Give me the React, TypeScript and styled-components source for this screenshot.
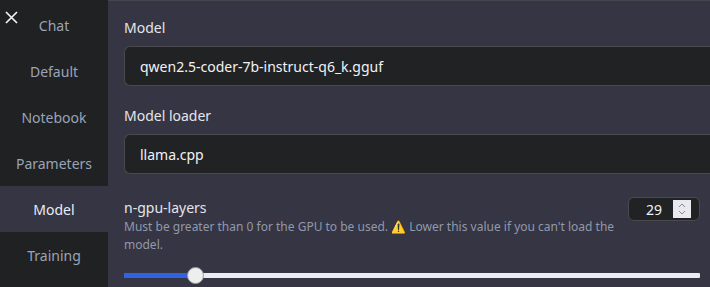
import React from 'react';
import styled, { createGlobalStyle } from 'styled-components';

const GlobalStyle = createGlobalStyle`
  html, body {
    margin: 0;
    padding: 0;
    background: #202123;
    font-family: "Noto Sans", "Open Sans", sans-serif;
    overflow: hidden;
  }
`;

const tabs = ['Chat', 'Default', 'Notebook', 'Parameters', 'Model', 'Training'];

export default function App() {
  return (
    <>
      <GlobalStyle />
      <Page>
        <Sidebar>
          <Close aria-label="close">
            <svg width="13" height="13" viewBox="0 0 13 13">
              <path d="M1 1 L12 12 M12 1 L1 12" stroke="#f2f2f2" strokeWidth="1.7" />
            </svg>
          </Close>
          {tabs.map((t) => (
            <Tab key={t} $active={t === 'Model'}>{t}</Tab>
          ))}
        </Sidebar>
        <Panel>
          <Field>
            <Label>Model</Label>
            <TextBox>qwen2.5-coder-7b-instruct-q6_k.gguf</TextBox>
          </Field>
          <Field>
            <Label>Model loader</Label>
            <TextBox>llama.cpp</TextBox>
          </Field>
          <SliderBlock>
            <SliderHead>
              <Info>
                <Label>n-gpu-layers</Label>
                <Help>
                  Must be greater than 0 for the GPU to be used. ⚠️ Lower this value if you can't load the model.
                </Help>
              </Info>
              <NumberBox>
                <NumberValue>29</NumberValue>
                <Spinner>
                  <svg width="10" height="14" viewBox="0 0 10 14">
                    <path d="M2 5 L5 2 L8 5 M2 9 L5 12 L8 9" stroke="#8a8a94" strokeWidth="1" fill="none" />
                  </svg>
                </Spinner>
              </NumberBox>
            </SliderHead>
            <Track>
              <Fill style={{ width: `${(29 / 256) * 100}%` }} />
              <Thumb />
            </Track>
          </SliderBlock>
        </Panel>
      </Page>
    </>
  );
}

const Page = styled.div`
  display: flex;
  width: 710px;
  height: 287px;
  overflow: hidden;
`;

const Sidebar = styled.nav`
  position: relative;
  width: 108px;
  flex-shrink: 0;
  background: #202123;
  padding-top: 2px;
  display: flex;
  flex-direction: column;
`;

const Close = styled.div`
  position: absolute;
  left: 5px;
  top: 11px;
  line-height: 0;
`;

const Tab = styled.div<{ $active?: boolean }>`
  height: 46px;
  display: flex;
  align-items: center;
  justify-content: center;
  font-size: 14px;
  color: ${(p) => (p.$active ? '#e8ecf4' : '#9aa4b6')};
  background: ${(p) => (p.$active ? '#353543' : 'transparent')};
`;

const Panel = styled.main`
  flex: 1;
  background: #353543;
  border-top: 1px solid #46464f;
  padding: 17px 0 0 16px;
  display: flex;
  flex-direction: column;
  gap: 20px;
`;

const Field = styled.div`
  display: flex;
  flex-direction: column;
  gap: 8px;
`;

const Label = styled.div`
  font-size: 14px;
  color: #e4e6ea;
  line-height: 20px;
`;

const TextBox = styled.div`
  height: 38px;
  display: flex;
  align-items: center;
  padding-left: 15px;
  background: #212224;
  border: 1px solid #4a4a4e;
  border-right: none;
  border-radius: 6px 0 0 6px;
  font-size: 14px;
  color: #f2f2f4;
`;

const SliderBlock = styled.div`
  display: flex;
  flex-direction: column;
  padding-right: 10px;
  margin-top: 4px;
`;

const SliderHead = styled.div`
  display: flex;
  align-items: flex-start;
  gap: 4px;
`;

const Info = styled.div`
  flex: 1;
  min-width: 0;
`;

const Help = styled.div`
  font-size: 12px;
  line-height: 18px;
  color: #9199aa;
`;

const NumberBox = styled.div`
  flex-shrink: 0;
  margin-top: -1px;
  width: 72px;
  height: 24px;
  border: 1px solid #4a4a4e;
  border-radius: 6px;
  background: #212224;
  display: flex;
  align-items: center;
  justify-content: flex-end;
  gap: 11px;
  padding-right: 8px;
  box-sizing: border-box;
`;

const NumberValue = styled.span`
  font-size: 14px;
  color: #f2f2f4;
`;

const Spinner = styled.div`
  width: 18px;
  height: 18px;
  background: #e8e8ee;
  display: flex;
  align-items: center;
  justify-content: center;
`;

const Track = styled.div`
  position: relative;
  margin-top: 19px;
  height: 5px;
  background: #ebebf0;
  border-radius: 1px;
`;

const Fill = styled.div`
  height: 100%;
  background: #2f63e3;
`;

const Thumb = styled.div`
  position: absolute;
  left: 63px;
  top: -6px;
  width: 15px;
  height: 15px;
  border-radius: 50%;
  background: #eeeeef;
  border: 1px solid #9a9aa4;
`;
